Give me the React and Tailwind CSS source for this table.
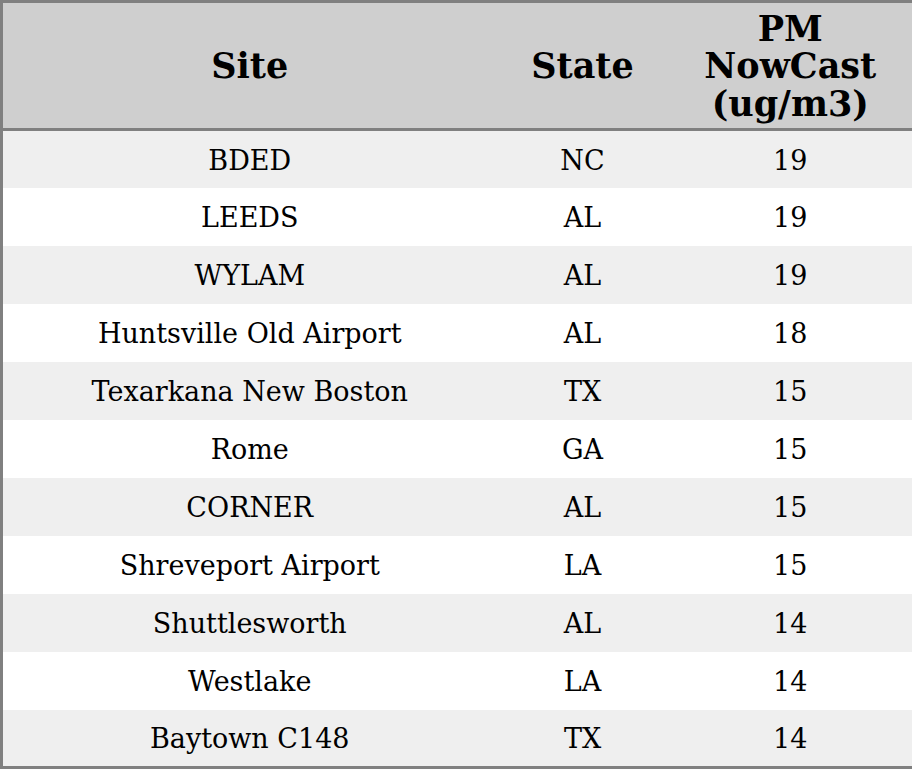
const rows = [
  ['BDED', 'NC', 19],
  ['LEEDS', 'AL', 19],
  ['WYLAM', 'AL', 19],
  ['Huntsville Old Airport', 'AL', 18],
  ['Texarkana New Boston', 'TX', 15],
  ['Rome', 'GA', 15],
  ['CORNER', 'AL', 15],
  ['Shreveport Airport', 'LA', 15],
  ['Shuttlesworth', 'AL', 14],
  ['Westlake', 'LA', 14],
  ['Baytown C148', 'TX', 14],
];

export default function App() {
  return (
    <div className="w-[912px] h-[769px] bg-white font-['DejaVu_Serif',serif] text-black">
      <table className="w-[912px] border-collapse border-[3px] border-[#808080] table-fixed">
        <colgroup>
          <col className="w-[495px]" />
          <col className="w-[172px]" />
          <col className="w-[245px]" />
        </colgroup>
        <thead>
          <tr className="h-[128px] bg-[#cfcfcf] border-b-[3px] border-[#808080]">
            <th className="text-[35px] leading-[37.5px] font-bold text-center align-middle p-0 pt-[1px]">Site</th>
            <th className="text-[35px] leading-[37.5px] font-bold text-center align-middle p-0 pt-[1px]">State</th>
            <th className="text-[35px] leading-[37.5px] font-bold text-center align-middle p-0 pt-[1px]">
              PM
              <br />
              NowCast
              <br />
              (ug/m3)
            </th>
          </tr>
        </thead>
        <tbody>
          {rows.map((r, i) => (
            <tr key={i} className={i % 2 === 0 ? 'h-[58px] bg-[#efefef]' : 'h-[58px] bg-white'}>
              <td className="text-[27px] text-center align-middle p-0 pt-[3px]">{r[0]}</td>
              <td className="text-[27px] text-center align-middle p-0 pt-[3px]">{r[1]}</td>
              <td className="text-[27px] text-center align-middle p-0 pt-[3px]">{r[2]}</td>
            </tr>
          ))}
        </tbody>
      </table>
    </div>
  );
}
